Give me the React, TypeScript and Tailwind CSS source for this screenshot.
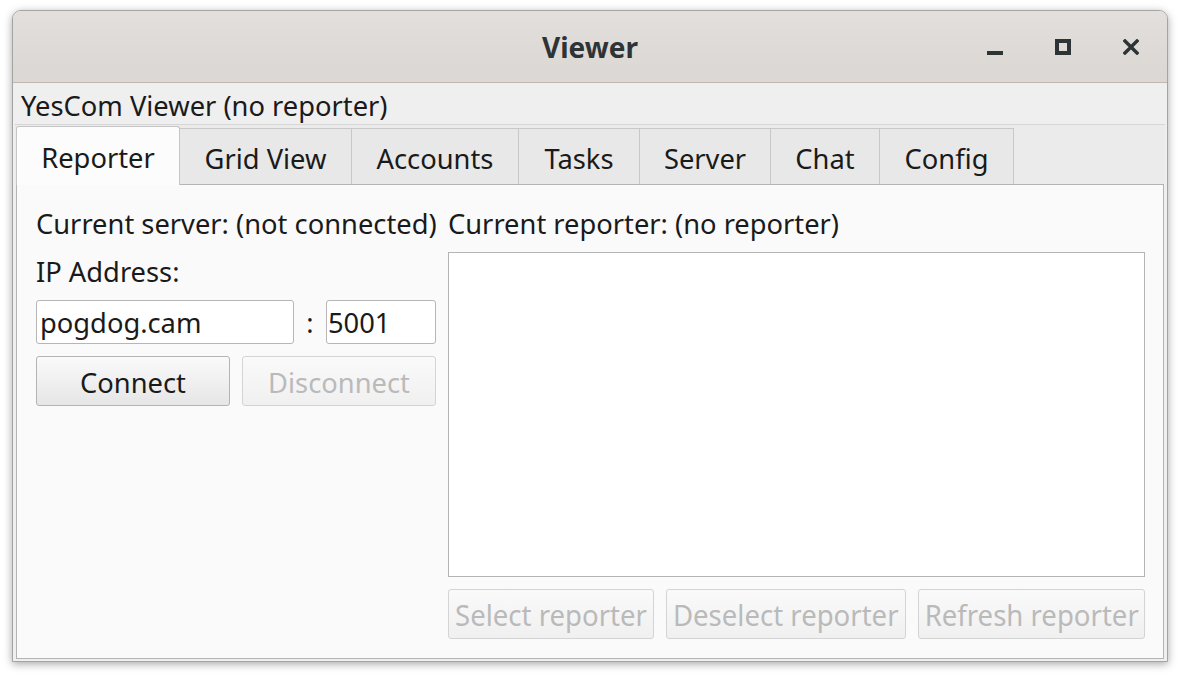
import React from "react";

const font = { fontFamily: '"Noto Sans", "Open Sans", sans-serif' };

function Tab({ label, selected, w }: { label: string; selected?: boolean; w: number }) {
  if (selected) {
    return (
      <div
        className="h-[59px] -mb-px pt-[5px] flex items-center justify-center bg-[#fcfcfc] border border-b-0 border-[#c6c6c6] rounded-t-[3px] text-[27.3px] text-[#1a1a1a] relative z-10"
        style={{ width: w }}
      >
        {label}
      </div>
    );
  }
  return (
    <div
      className="h-[56px] pt-[5px] flex items-center justify-center bg-[#e8e8e8] border border-b-0 border-l-0 border-[#c8c8c8] text-[27.3px] text-[#1a1a1a]"
      style={{ width: w }}
    >
      {label}
    </div>
  );
}

function Btn({ label, disabled, w, condensed }: { label: string; disabled?: boolean; w: number; condensed?: boolean }) {
  return (
    <div
      className={
        "h-[50px] flex items-center justify-center rounded-[3px] border overflow-hidden whitespace-nowrap " +
        (condensed ? "text-[29px] pt-[2px] " : "text-[27.3px] pt-[4px] ") +
        (disabled
          ? "border-[#d4d4d4] bg-gradient-to-b from-[#fafafa] to-[#f0f0f0] text-[#bababa]"
          : "border-[#b4b4b4] bg-gradient-to-b from-[#fafafa] to-[#e6e6e6] text-[#1a1a1a]")
      }
      style={{ width: w }}
    >
      <span className={condensed ? "inline-block scale-x-[0.95]" : ""}>{label}</span>
    </div>
  );
}

export default function App() {
  return (
    <div className="w-[1180px] h-[678px] bg-white overflow-hidden pt-[10px] pl-[12px]" style={font}>
      <div className="w-[1156px] h-[652px] rounded-t-[9px] border border-[#a4a4a4] shadow-[0_2px_9px_rgba(0,0,0,0.35)] flex flex-col overflow-hidden bg-[#efefef]">
        {/* title bar */}
        <div className="h-[72px] shrink-0 bg-gradient-to-b from-[#e2dfdc] to-[#dbd7d3] border-b border-[#bfb8b1] relative flex items-center justify-center">
          <span className="text-[28px] font-bold text-[#2e3436] pt-[1px]">Viewer</span>
          <div className="absolute right-[28px] top-[28px] flex items-center gap-[52px]">
            <svg width="16" height="16" viewBox="0 0 16 16">
              <rect x="0" y="12" width="16" height="4" fill="#2e3436" />
            </svg>
            <svg width="16" height="16" viewBox="0 0 16 16">
              <rect x="2" y="2" width="12" height="12" fill="none" stroke="#2e3436" strokeWidth="4" />
            </svg>
            <svg width="16" height="16" viewBox="0 0 16 16">
              <path d="M2 2 L14 14 M14 2 L2 14" stroke="#2e3436" strokeWidth="3.4" strokeLinecap="square" />
            </svg>
          </div>
        </div>
        {/* body */}
        <div className="flex-1 flex flex-col px-[2px] pb-[2px]">
          <div className="h-[41px] shrink-0 flex items-center pl-[6px] pt-[5px] text-[27.3px] text-[#1a1a1a]">
            YesCom Viewer (no reporter)
          </div>
          <div className="h-[60px] shrink-0 border-t border-[#d6d6d6] bg-[#ebebeb] flex items-end pl-[1px]">
            <Tab label="Reporter" selected w={164} />
            <Tab label="Grid View" w={172} />
            <Tab label="Accounts" w={167} />
            <Tab label="Tasks" w={121} />
            <Tab label="Server" w={131} />
            <Tab label="Chat" w={109} />
            <Tab label="Config" w={134} />
          </div>
          <div className="flex-1 ml-[1px] mr-[1px] bg-[#fafafa] border border-[#b4b4b4] flex pl-[19px] pr-[18px] pt-[20px] pb-[19px] gap-[12px] text-[27.3px] text-[#1a1a1a]">
            {/* left column */}
            <div className="w-[400px] shrink-0 flex flex-col">
              <div className="h-[36px] pt-[2px] flex items-center whitespace-nowrap">Current server: (not connected)</div>
              <div className="h-[36px] mt-[12px] pt-[2px] flex items-center">IP Address:</div>
              <div className="mt-[11px] flex items-center">
                <div className="w-[258px] h-[44px] pt-[3px] bg-white border border-[#b6b6b6] rounded-[3px] flex items-center pl-[3px]">
                  pogdog.cam
                </div>
                <div className="w-[32px] text-center pt-[3px]">:</div>
                <div className="w-[110px] h-[44px] pt-[3px] bg-white border border-[#b6b6b6] rounded-[3px] flex items-center pl-[1px]">
                  5001
                </div>
              </div>
              <div className="mt-[12px] flex gap-[12px]">
                <Btn label="Connect" w={194} />
                <Btn label="Disconnect" disabled w={194} />
              </div>
            </div>
            {/* right column */}
            <div className="flex-1 flex flex-col">
              <div className="h-[36px] pt-[2px] flex items-center whitespace-nowrap">Current reporter: (no reporter)</div>
              <div className="mt-[11px] flex-1 bg-white border border-[#b4b4b4]" />
              <div className="mt-[12px] flex gap-[12px]">
                <Btn label="Select reporter" disabled condensed w={206} />
                <Btn label="Deselect reporter" disabled condensed w={240} />
                <Btn label="Refresh reporter" disabled condensed w={227} />
              </div>
            </div>
          </div>
        </div>
      </div>
    </div>
  );
}
